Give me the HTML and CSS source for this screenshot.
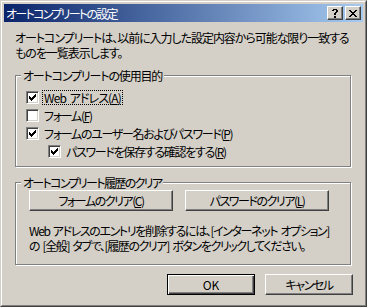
FILE: index.html
```html
<!DOCTYPE html>
<html lang="ja">
<head>
<meta charset="utf-8">
<title>オートコンプリートの設定</title>
<link rel="stylesheet" href="styles.css">
</head>
<body>
<div class="window">
  <div class="frame">
    <div class="titlebar">
      <span class="title">オートコンプリートの設定</span>
      <div class="caps">
        <span class="cap">
          <svg width="6" height="9" viewBox="0 0 6 9" shape-rendering="crispEdges"><path d="M1 0h4v1h-4z M0 1h2v1h-2z M4 1h2v1h-2z M4 2h2v1h-2z M3 3h2v1h-2z M2 4h2v2h-2z M2 7h2v2h-2z" fill="#000"/></svg>
        </span>
        <span class="cap">
          <svg width="8" height="7" viewBox="0 0 8 7" shape-rendering="crispEdges"><path d="M0 0h2v1h-2z M6 0h2v1h-2z M1 1h2v1h-2z M5 1h2v1h-2z M2 2h4v1h-4z M3 3h2v1h-2z M2 4h4v1h-4z M1 5h2v1h-2z M5 5h2v1h-2z M0 6h2v1h-2z M6 6h2v1h-2z" fill="#000"/></svg>
        </span>
      </div>
    </div>
    <div class="client">
      <p class="desc">オートコンプリートは、以前に入力した設定内容から可能な限り一致する<br>ものを一覧表示します。</p>

      <div class="group group-use">
        <div class="legend legend-use">オートコンプリートの使用目的</div>
        <div class="check first">
          <span class="box"><svg class="mark" width="7" height="7" viewBox="0 0 7 7" shape-rendering="crispEdges"><path d="M0 2h1v3h-1z M1 3h1v3h-1z M2 4h1v3h-1z M3 3h1v3h-1z M4 2h1v3h-1z M5 1h1v3h-1z M6 0h1v3h-1z" fill="#000"/></svg></span>
          <span class="lbl focus">Web アドレス(<u>A</u>)</span>
        </div>
        <div class="check">
          <span class="box"></span>
          <span class="lbl">フォーム(<u>F</u>)</span>
        </div>
        <div class="check">
          <span class="box"><svg class="mark" width="7" height="7" viewBox="0 0 7 7" shape-rendering="crispEdges"><path d="M0 2h1v3h-1z M1 3h1v3h-1z M2 4h1v3h-1z M3 3h1v3h-1z M4 2h1v3h-1z M5 1h1v3h-1z M6 0h1v3h-1z" fill="#000"/></svg></span>
          <span class="lbl">フォームのユーザー名およびパスワード(<u>P</u>)</span>
        </div>
        <div class="check indent">
          <span class="box"><svg class="mark" width="7" height="7" viewBox="0 0 7 7" shape-rendering="crispEdges"><path d="M0 2h1v3h-1z M1 3h1v3h-1z M2 4h1v3h-1z M3 3h1v3h-1z M4 2h1v3h-1z M5 1h1v3h-1z M6 0h1v3h-1z" fill="#000"/></svg></span>
          <span class="lbl">パスワードを保存する確認をする(<u>R</u>)</span>
        </div>
      </div>

      <div class="group group-clear">
        <div class="legend legend-clear">オートコンプリート履歴のクリア</div>
        <div class="btnrow">
          <button class="btn wide">フォームのクリア(<u>C</u>)</button>
          <button class="btn wide">パスワードのクリア(<u>L</u>)</button>
        </div>
        <p class="note">Web アドレスのエントリを削除するには、[インターネット オプション]<br>の [全般] タブで、[履歴のクリア] ボタンをクリックしてください。</p>
      </div>

      <div class="footer">
        <button class="btn default ok">OK</button>
        <button class="btn">キャンセル</button>
      </div>
    </div>
  </div>
</div>
</body>
</html>
```

FILE: styles.css
```css
html, body {
  margin: 0;
  padding: 0;
  background: #d4d0c8;
}

body {
  font-family: "Noto Sans CJK JP", "Noto Sans", sans-serif;
  font-size: 12px;
  line-height: 15px;
  color: #000;
  font-feature-settings: "palt";
  letter-spacing: -1.3px;
}

.window {
  width: 367px;
  height: 307px;
  box-sizing: border-box;
  border: 1px solid;
  border-color: #d4d0c8 #404040 #404040 #d4d0c8;
  background: #d4d0c8;
}

.frame {
  height: 100%;
  box-sizing: border-box;
  border: 1px solid;
  border-color: #ffffff #808080 #808080 #ffffff;
  padding: 2px;
}

.titlebar {
  height: 18px;
  display: flex;
  align-items: center;
  justify-content: space-between;
  background: linear-gradient(to right, #0a246a, #a6caf0);
  padding: 0 2px 0 2px;
}

.title {
  color: #fff;
  white-space: nowrap;
  letter-spacing: -1.7px;
}

.caps {
  display: flex;
  gap: 2px;
}

.cap {
  width: 16px;
  height: 14px;
  box-sizing: border-box;
  display: flex;
  align-items: center;
  justify-content: center;
  background: #d4d0c8;
  border: 1px solid;
  border-color: #ffffff #404040 #404040 #ffffff;
  box-shadow: inset -1px -1px #808080;
}

.client {
  padding: 0 11px;
}

.desc {
  margin: 8px 0 0 0;
  white-space: nowrap;
  letter-spacing: -1.05px;
}

.group {
  margin-top: 15px;
  width: 336px;
  box-sizing: border-box;
  border: 1px solid #808080;
  box-shadow: inset 1px 1px #ffffff, 1px 1px #ffffff;
}

.group-use {
  height: 92px;
}

.group-clear {
  height: 83px;
}

.legend {
  width: fit-content;
  margin: -8px 0 0 5px;
  padding: 0 2px;
  background: #d4d0c8;
  white-space: nowrap;
}

.legend-use {
  letter-spacing: -1.15px;
}

.legend-clear {
  letter-spacing: -1.65px;
}

.check {
  display: flex;
  align-items: center;
  height: 13px;
  margin: 5px 0 0 10px;
  gap: 4px;
}

.check.first {
  margin-top: 8px;
}

.check.indent {
  margin-left: 32px;
}

.box {
  width: 13px;
  height: 13px;
  box-sizing: border-box;
  flex: none;
  background: #fff;
  border: 1px solid;
  border-color: #808080 #ffffff #ffffff #808080;
  box-shadow: inset 1px 1px #404040, inset -1px -1px #d4d0c8;
  display: flex;
  align-items: flex-start;
  justify-content: flex-start;
}

.mark {
  display: block;
  margin: 2px 0 0 2px;
}

.lbl {
  padding: 0 1px;
  white-space: nowrap;
  line-height: 13px;
}

.focus {
  outline: 1px dotted #000;
  outline-offset: 0;
  letter-spacing: -0.9px;
  word-spacing: 2px;
}

u {
  text-decoration: underline;
  text-underline-offset: 1px;
}

.btnrow {
  display: flex;
  gap: 12px;
  margin-left: 13px;
}

.btn {
  font: inherit;
  letter-spacing: -1.45px;
  color: #000;
  background: #d4d0c8;
  height: 21px;
  width: 88px;
  box-sizing: border-box;
  padding: 0;
  margin: 0;
  border: 1px solid;
  border-color: #ffffff #404040 #404040 #ffffff;
  box-shadow: inset -1px -1px #808080;
  border-radius: 0;
  display: flex;
  align-items: center;
  justify-content: center;
  white-space: nowrap;
}

.btn.wide {
  width: 144px;
}

.btn.default {
  border-color: #000;
  box-shadow: inset 1px 1px #ffffff, inset -1px -1px #404040, inset -2px -2px #808080;
}

.btn.ok {
  letter-spacing: 0;
}

.note {
  margin: 12px 0 0 13px;
  white-space: nowrap;
  letter-spacing: -1.38px;
  word-spacing: 2px;
}

.footer {
  display: flex;
  justify-content: flex-end;
  gap: 10px;
  margin-top: 9px;
  margin-right: -1px;
}
```
